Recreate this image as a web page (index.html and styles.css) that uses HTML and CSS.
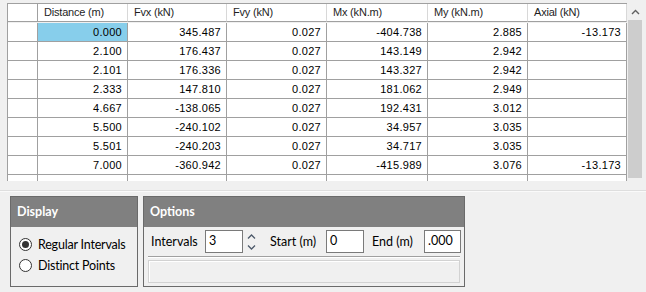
FILE: index.html
```html
<!DOCTYPE html>
<html lang="en">
<head>
    <meta charset="UTF-8">
    <title>Results</title>
    <link rel="stylesheet" href="styles.css">
</head>
<body>
    <div class="grid-wrap">
        <div class="grid">
            <div class="hd rh"></div>
            <div class="hd">Distance (m)</div>
            <div class="hd">Fvx (kN)</div>
            <div class="hd">Fvy (kN)</div>
            <div class="hd">Mx (kN.m)</div>
            <div class="hd">My (kN.m)</div>
            <div class="hd">Axial (kN)</div>

            <div class="rh"></div><div class="sel">0.000</div><div>345.487</div><div>0.027</div><div>-404.738</div><div>2.885</div><div>-13.173</div>
            <div class="rh"></div><div>2.100</div><div>176.437</div><div>0.027</div><div>143.149</div><div>2.942</div><div></div>
            <div class="rh"></div><div>2.101</div><div>176.336</div><div>0.027</div><div>143.327</div><div>2.942</div><div></div>
            <div class="rh"></div><div>2.333</div><div>147.810</div><div>0.027</div><div>181.062</div><div>2.949</div><div></div>
            <div class="rh"></div><div>4.667</div><div>-138.065</div><div>0.027</div><div>192.431</div><div>3.012</div><div></div>
            <div class="rh"></div><div>5.500</div><div>-240.102</div><div>0.027</div><div>34.957</div><div>3.035</div><div></div>
            <div class="rh"></div><div>5.501</div><div>-240.203</div><div>0.027</div><div>34.717</div><div>3.035</div><div></div>
            <div class="rh"></div><div>7.000</div><div>-360.942</div><div>0.027</div><div>-415.989</div><div>3.076</div><div>-13.173</div>
            <div class="rh part"></div><div class="part"></div><div class="part"></div><div class="part"></div><div class="part"></div><div class="part"></div><div class="part"></div>
        </div>
        <div class="vscroll">
            <div class="arrow">
                <svg width="9" height="6" viewBox="0 0 9 6"><path d="M1 5 L4.5 1.5 L8 5" fill="none" stroke="#606060" stroke-width="1.4"/></svg>
            </div>
            <div class="thumb"></div>
        </div>
    </div>

    <div class="panel">
        <div class="group display">
            <div class="group-head">Display</div>
            <div class="group-body radios">
                <label class="radio"><span class="dot checked"></span>Regular Intervals</label>
                <label class="radio"><span class="dot"></span>Distinct Points</label>
            </div>
        </div>
        <div class="group options">
            <div class="group-head">Options</div>
            <div class="group-body">
                <div class="opt-row">
                    <span class="lbl lbl-int">Intervals</span>
                    <span class="field">3</span>
                    <span class="spin">
                        <svg width="9" height="5" viewBox="0 0 9 5"><path d="M1 4.5 L4.5 1 L8 4.5" fill="none" stroke="#4d5a6b" stroke-width="1.3"/></svg>
                        <svg width="9" height="5" viewBox="0 0 9 5"><path d="M1 0.5 L4.5 4 L8 0.5" fill="none" stroke="#4d5a6b" stroke-width="1.3"/></svg>
                    </span>
                    <span class="lbl lbl-start">Start (m)</span>
                    <span class="field">0</span>
                    <span class="lbl lbl-end">End (m)</span>
                    <span class="field field-end">.000</span>
                </div>
                <div class="sep"></div>
                <div class="status"></div>
            </div>
        </div>
    </div>
</body>
</html>
```

FILE: styles.css
```css
body {
    margin: 0;
    background: #f0f0f0;
    font-family: 'Liberation Sans', Arial, sans-serif;
    color: #000;
    width: 646px;
    height: 292px;
    overflow: hidden;
}
.grid-wrap {
    display: flex;
    margin: 3px 3px 0 7px;
    height: 178px;
    overflow: hidden;
}
.grid {
    display: grid;
    grid-template-columns: 30px 90px 99px 100px 101px 100px 99px;
    grid-auto-rows: 19px;
    border-left: 1px solid #a0a0a0;
    border-top: 1px solid #a0a0a0;
    align-self: flex-start;
    font-size: 11px;
}
.grid > div {
    box-sizing: border-box;
    background: #fff;
    border-right: 1px solid #a0a0a0;
    border-bottom: 1px solid #a0a0a0;
    text-align: right;
    padding: 0 5px;
    line-height: 18px;
    white-space: nowrap;
    letter-spacing: 0.3px;
}
.grid > .hd {
    height: 18px;
    line-height: 17px;
    text-align: left;
    padding-left: 6px;
    color: #1e1e1e;
    letter-spacing: -0.2px;
    border-right-color: #d8d8d8;
}
.grid > .hd.rh {
    border-right-color: #a0a0a0;
}
.grid > .hd:last-child {
    border-right-color: #a0a0a0;
}
.grid > .sel {
    background: #87ceeb;
}
.grid > .part {
    height: 7px;
}
.vscroll {
    width: 16px;
    height: 178px;
    background: #f0f0f0;
    display: flex;
    flex-direction: column;
}
.arrow {
    height: 17px;
    display: flex;
    align-items: center;
    justify-content: center;
}
.thumb {
    height: 158px;
    margin: 0 1px 0 1px;
    background: #cdcdcd;
}
.panel {
    margin-top: 9px;
    border-top: 1px solid #dedede;
    box-shadow: inset 0 1px 0 #fafafa;
    padding: 5px 0 0 10px;
    display: flex;
    gap: 5px;
    font-family: Lato, 'Noto Sans', sans-serif;
    font-size: 12.5px;
    color: #000;
}
.group {
    box-sizing: border-box;
    height: 91px;
    border: 1px solid #6a6a6a;
    background: #f0f0f0;
}
.display {
    width: 128px;
}
.options {
    width: 322px;
}
.group-head {
    height: 30px;
    background: #808080;
    color: #fff;
    font-weight: bold;
    line-height: 30px;
    padding-left: 6px;
}
.radios {
    padding: 7px 0 0 8px;
}
.radio {
    display: flex;
    align-items: center;
    height: 21px;
    letter-spacing: -0.2px;
}
.dot {
    box-sizing: border-box;
    width: 13px;
    height: 13px;
    border: 1px solid #333;
    border-radius: 50%;
    background: #fff;
    margin-right: 6px;
    display: flex;
    align-items: center;
    justify-content: center;
}
.dot.checked::after {
    content: '';
    width: 7px;
    height: 7px;
    border-radius: 50%;
    background: #333;
}
.opt-row {
    display: flex;
    align-items: center;
    padding: 3px 0 0 7px;
    height: 23px;
}
.lbl-int {
    width: 54px;
}
.lbl-start {
    width: 56px;
}
.lbl-end {
    margin-left: 8px;
    width: 52px;
}
.field {
    box-sizing: border-box;
    width: 38px;
    height: 23px;
    border: 1px solid #7a7a7a;
    background: #fff;
    padding: 0 3px;
    line-height: 19px;
}
.field-end {
    width: 37px;
}
.spin {
    width: 27px;
    height: 23px;
    display: flex;
    flex-direction: column;
    justify-content: center;
    gap: 6px;
    padding-left: 4px;
    box-sizing: border-box;
}
.spin svg {
    display: block;
}
.sep {
    margin: 3px 4px 0 4px;
    height: 1px;
    background: #a0a0a0;
    border-bottom: 1px solid #fff;
}
.status {
    margin: 2px 4px 0 4px;
    height: 23px;
    box-sizing: border-box;
    border: 1px solid #d2d2d2;
    box-shadow: inset 1px 1px 0 #fff;
    background: #f0f0f0;
}
```
